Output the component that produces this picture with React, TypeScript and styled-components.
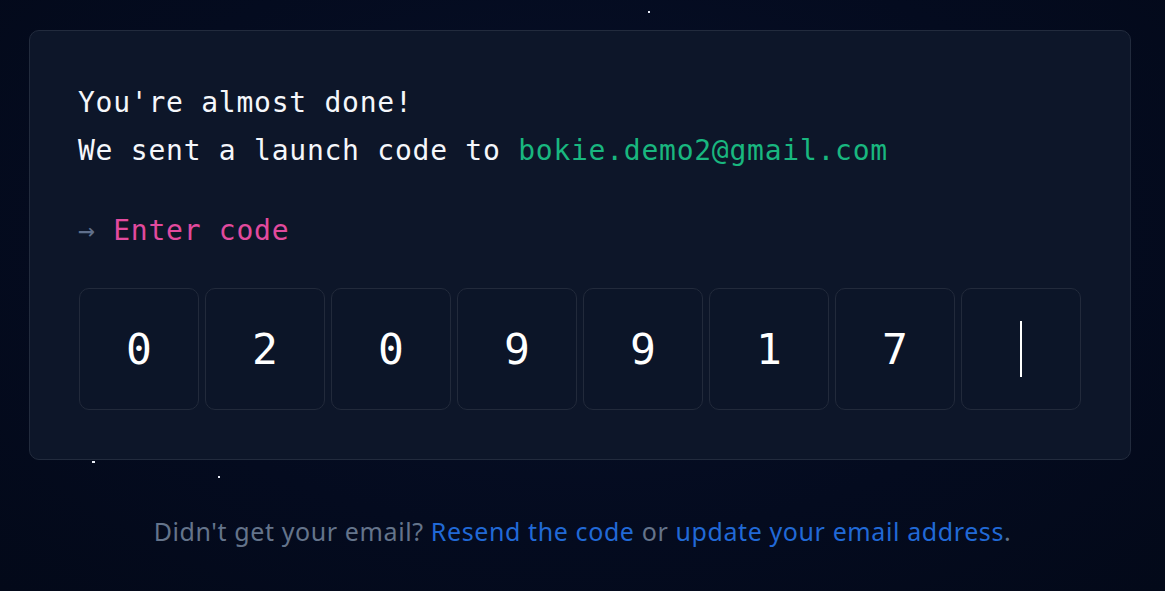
import React from "react";
import styled, { createGlobalStyle } from "styled-components";

const Global = createGlobalStyle`
  html, body { margin: 0; padding: 0; background: #040b1e; }
  body { width: 1165px; height: 591px; overflow: hidden; }
`;

const Page = styled.div`
  position: relative;
  width: 1165px;
  height: 591px;
  background: radial-gradient(ellipse at 50% 40%, #071029 0%, #040b1f 60%, #030919 100%);
  padding: 30px 34px 0 29px;
  box-sizing: border-box;
  display: flex;
  flex-direction: column;
`;

const Star = styled.span<{ $x: number; $y: number; $w?: number }>`
  position: absolute;
  left: ${(p) => p.$x}px;
  top: ${(p) => p.$y}px;
  width: ${(p) => p.$w ?? 2}px;
  height: 2px;
  background: #e8ecf6;
`;

const Card = styled.section`
  background: #0d1629;
  border: 1px solid #222b3d;
  border-radius: 10px;
  padding: 48px 48px 49px 48px;
  height: 430px;
  box-sizing: border-box;
  font-family: "DejaVu Sans Mono", "Liberation Mono", monospace;
  font-size: 28px;
  letter-spacing: 0.75px;
  color: #f5f7fb;
`;

const Line = styled.div`
  line-height: 48px;
  height: 48px;
  white-space: pre;
`;

const Email = styled.span`
  color: #19b77f;
`;

const Prompt = styled.div`
  margin-top: 32px;
  line-height: 48px;
  height: 48px;
  white-space: pre;
  color: #e24a9e;
`;

const Arrow = styled.span`
  color: #5f6f8c;
`;

const Boxes = styled.div`
  margin: 33px 0 0 1px;
  display: grid;
  grid-template-columns: repeat(8, 120px);
  gap: 6px;
`;

const Box = styled.div`
  height: 122px;
  box-sizing: border-box;
  border: 1px solid #222a3b;
  border-radius: 10px;
  background: #0c1528;
  display: flex;
  align-items: center;
  justify-content: center;
  font-size: 43px;
  letter-spacing: 0;
  color: #ffffff;
`;

const Caret = styled.span`
  display: block;
  width: 2px;
  height: 56px;
  background: #ffffff;
`;

const Footer = styled.p`
  margin: 53px 0 0;
  text-align: center;
  font-family: "Noto Sans", "Open Sans", sans-serif;
  font-size: 25px;
  letter-spacing: 0.6px;
  line-height: 36px;
  color: #64748b;
  padding-left: 5px;
`;

const Link = styled.a`
  color: #2169d6;
  text-decoration: none;
`;

const digits = ["0", "2", "0", "9", "9", "1", "7"];

export default function App() {
  return (
    <>
      <Global />
      <Page>
        <Star $x={648} $y={11} />
        <Star $x={92} $y={461} $w={3} />
        <Star $x={218} $y={476} />
        <Card>
          <Line>You're almost done!</Line>
          <Line>
            We sent a launch code to <Email>bokie.demo2@gmail.com</Email>
          </Line>
          <Prompt>
            <Arrow>→</Arrow> Enter code
          </Prompt>
          <Boxes>
            {digits.map((d, i) => (
              <Box key={i}>{d}</Box>
            ))}
            <Box>
              <Caret />
            </Box>
          </Boxes>
        </Card>
        <Footer>
          Didn't get your email? <Link href="#">Resend the code</Link> or{" "}
          <Link href="#">update your email address</Link>.
        </Footer>
      </Page>
    </>
  );
}
